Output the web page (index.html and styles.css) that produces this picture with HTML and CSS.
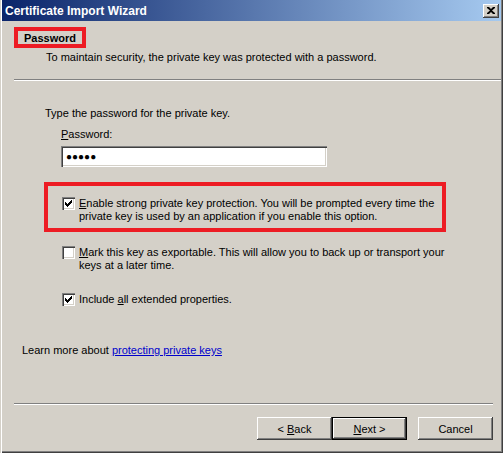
FILE: index.html
```html
<!DOCTYPE html>
<html lang="en">
<head>
  <meta charset="UTF-8" />
  <title>Certificate Import Wizard</title>
  <link rel="stylesheet" href="styles.css">
</head>
<body>
  <div class="window">
    <div class="titlebar">
      <span class="title">Certificate Import Wizard</span>
      <button class="close">
        <svg width="8" height="7" viewBox="0 0 8 7"><path d="M0 0h2l2 2 2-2h2v1L5 3.5 8 6v1H6L4 5 2 7H0V6l3-2.5L0 1z" fill="#000"/></svg>
      </button>
    </div>

    <div class="header">
      <span class="header-title">Password</span>
      <p class="header-sub">To maintain security, the private key was protected with a password.</p>
    </div>

    <div class="content">
      <p class="intro">Type the password for the private key.</p>

      <div class="field">
        <label><u>P</u>assword:</label>
        <div class="input">&#9679;&#9679;&#9679;&#9679;&#9679;</div>
      </div>

      <div class="option highlight">
        <span class="check"><svg width="7" height="7" viewBox="0 0 7 7"><path d="M0 2h1v1h1v1h1V3h1V2h1V1h1V0h1v3H6v1H5v1H4v1H3v1H2V6H1V5H0z" fill="#000"/></svg></span>
        <span class="option-text"><u>E</u>nable strong private key protection. You will be prompted every time the<br>private key is used by an application if you enable this option.</span>
      </div>

      <div class="option">
        <span class="check"></span>
        <span class="option-text"><u>M</u>ark this key as exportable. This will allow you to back up or transport your<br>keys at a later time.</span>
      </div>

      <div class="option">
        <span class="check"><svg width="7" height="7" viewBox="0 0 7 7"><path d="M0 2h1v1h1v1h1V3h1V2h1V1h1V0h1v3H6v1H5v1H4v1H3v1H2V6H1V5H0z" fill="#000"/></svg></span>
        <span class="option-text">Include <u>a</u>ll extended properties.</span>
      </div>

      <p class="learn">Learn more about <a href="#">protecting private keys</a></p>
    </div>

    <div class="footer">
      <div class="buttons">
        <button class="btn">&lt; <u>B</u>ack</button>
        <button class="btn default"><u>N</u>ext &gt;</button>
        <button class="btn cancel">Cancel</button>
      </div>
    </div>
  </div>
</body>
</html>
```

FILE: styles.css
```css
* {
  box-sizing: border-box;
}

body {
  margin: 0;
  background: #d4d0c8;
  font-family: "Liberation Sans", Arial, sans-serif;
  font-size: 11px;
  color: #000;
}

p {
  margin: 0;
}

.window {
  width: 503px;
  height: 453px;
  background: #d4d0c8;
  padding: 0 2px 2px 2px;
  box-shadow: inset 1px 0 #d4d0c8, inset 2px 0 #fff, inset -1px -1px #404040, inset -2px -2px #808080;
  display: flex;
  flex-direction: column;
}

.titlebar {
  height: 21px;
  background: linear-gradient(to right, #0a246a, #a6caf0);
  display: flex;
  align-items: center;
  justify-content: space-between;
  padding: 0 2px 0 3px;
}

.title {
  color: #fff;
  font-weight: bold;
  font-size: 12px;
}

.close {
  width: 16px;
  height: 14px;
  padding: 0;
  border: none;
  background: #d4d0c8;
  box-shadow: inset -1px -1px #404040, inset 1px 1px #fff, inset -2px -2px #808080;
  display: flex;
  align-items: center;
  justify-content: center;
}

.header {
  height: 60px;
  margin-left: 12px;
  padding-top: 6px;
  border-bottom: 1px solid #fff;
  box-shadow: inset 0 -1px #808080;
}

.header-title {
  display: inline-block;
  border: 4px solid #ed1c24;
  padding: 1px 6px 0 6px;
  height: 21px;
  font-weight: bold;
  line-height: 13px;
}

.header-sub {
  margin: 3px 0 0 32px;
  line-height: 13px;
}

.content {
  flex: 1;
  padding: 26px 0 0 20px;
}

.intro {
  margin-left: 23px;
  line-height: 13px;
}

.field {
  margin: 8px 0 0 39px;
}

.field label {
  display: block;
  line-height: 13px;
}

.input {
  margin-top: 5px;
  width: 266px;
  height: 21px;
  background: #fff;
  box-shadow: inset 1px 1px #808080, inset 2px 2px #404040, inset -1px -1px #fff, inset -2px -2px #d4d0c8;
  padding: 4px 0 0 5px;
  font-size: 10px;
  line-height: 13px;
}

.option {
  display: flex;
  align-items: flex-start;
  gap: 4px;
  margin: 21px 0 0 40px;
  width: 385px;
  line-height: 13px;
}

.option.highlight {
  margin: 15px 0 0 22px;
  width: 402px;
  height: 50px;
  border: 4px solid #ed1c24;
  padding: 11px 0 0 14px;
}

.option.highlight + .option {
  margin-top: 14px;
}

.check {
  flex: none;
  width: 13px;
  height: 13px;
  background: #fff;
  box-shadow: inset 1px 1px #808080, inset 2px 2px #404040, inset -1px -1px #fff, inset -2px -2px #d4d0c8;
  display: flex;
  align-items: center;
  justify-content: center;
}

.learn {
  margin-top: 38px;
  line-height: 13px;
}

.learn a {
  color: #0000cc;
}

.footer {
  height: 48px;
  margin: 0 8px 0 12px;
  border-top: 1px solid #808080;
  box-shadow: inset 0 1px #fff;
}

.buttons {
  display: flex;
  justify-content: flex-end;
  margin-top: 13px;
}

.btn {
  width: 75px;
  height: 23px;
  border: none;
  background: #d4d0c8;
  font-family: inherit;
  font-size: 11px;
  color: #000;
  box-shadow: inset -1px -1px #404040, inset 1px 1px #fff, inset -2px -2px #808080;
  padding: 0;
}

.btn.default {
  box-shadow: inset 0 0 0 1px #000, inset -2px -2px #404040, inset 2px 2px #fff, inset -3px -3px #808080;
}

.btn.cancel {
  margin-left: 11px;
}
```
